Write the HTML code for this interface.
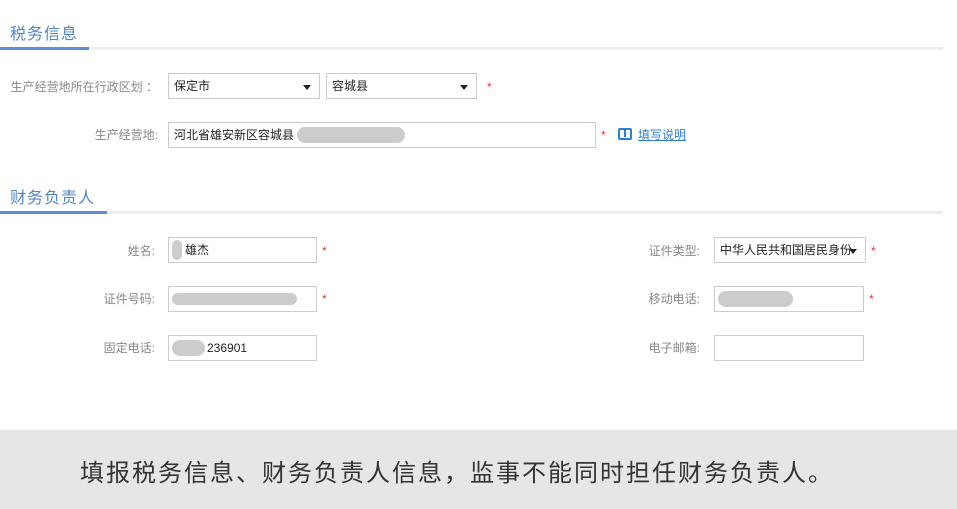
<!DOCTYPE html>
<html><head><meta charset="utf-8"><style>
*{margin:0;padding:0;box-sizing:border-box}
body{width:957px;height:509px;background:#fff;position:relative;overflow:hidden;font-family:"Liberation Sans","Noto Sans CJK SC",sans-serif;font-size:12px;color:#222}
.a{position:absolute}
.t{font-size:16px;color:#4f86c8;letter-spacing:1px}
.lab{color:#888;text-align:right;width:200px;line-height:14px}
.box{border:1px solid #ccc;background:#fff;height:26px;line-height:24px;padding-left:5px;color:#222}
.st{color:#e03a3a;font-size:12px}
.arr{position:absolute;right:8px;top:11px;border-left:4px solid transparent;border-right:4px solid transparent;border-top:5px solid #222}
.blur{position:absolute;background:#ccc;border-radius:8px;height:16px;top:4px}
</style></head><body>
<div class="a t" style="left:10px;top:20px">税务信息</div>
<div class="a" style="left:0;top:47px;width:943px;height:3px;background:#eee"></div>
<div class="a" style="left:0;top:47px;width:89px;height:3px;background:#5b8fd6"></div>
<div class="a lab" style="left:-42px;top:80px">生产经营地所在行政区划 ：</div>
<div class="a box" style="left:168px;top:73px;width:152px">保定市<span class="arr"></span></div>
<div class="a box" style="left:326px;top:73px;width:151px">容城县<span class="arr"></span></div>
<div class="a st" style="left:487px;top:80px">*</div>
<div class="a lab" style="left:-42px;top:128px">生产经营地:</div>
<div class="a box" style="left:168px;top:122px;width:428px">河北省雄安新区容城县 <span class="blur" style="left:128px;width:108px"></span></div>
<div class="a st" style="left:601px;top:128px">*</div>
<div class="a" style="left:618px;top:128px;width:14px;height:12px;border:2px solid #2f7fd0;border-radius:2px"></div>
<div class="a" style="left:624px;top:128px;width:2px;height:9px;background:#2f7fd0"></div>
<div class="a" style="left:638px;top:126px;color:#2f7fd0;text-decoration:underline">填写说明</div>
<div class="a t" style="left:10px;top:184px">财务负责人</div>
<div class="a" style="left:0;top:211px;width:943px;height:3px;background:#eee"></div>
<div class="a" style="left:0;top:211px;width:107px;height:3px;background:#5b8fd6"></div>
<div class="a lab" style="left:-45px;top:244px">姓名:</div>
<div class="a box" style="left:168px;top:237px;width:149px;padding-left:16px">雄杰<span class="blur" style="left:3px;width:10px;height:20px;top:2px"></span></div>
<div class="a st" style="left:322px;top:244px">*</div>
<div class="a lab" style="left:-45px;top:292px">证件号码:</div>
<div class="a box" style="left:168px;top:286px;width:149px"><span class="blur" style="left:3px;width:125px;height:12px;top:6px"></span></div>
<div class="a st" style="left:322px;top:292px">*</div>
<div class="a lab" style="left:-45px;top:341px">固定电话:</div>
<div class="a box" style="left:168px;top:335px;width:149px;padding-left:38px">236901<span class="blur" style="left:3px;width:33px"></span></div>
<div class="a lab" style="left:500px;top:244px">证件类型:</div>
<div class="a box" style="left:714px;top:237px;width:152px">中华人民共和国居民身份<span class="arr"></span></div>
<div class="a st" style="left:871px;top:244px">*</div>
<div class="a lab" style="left:500px;top:292px">移动电话:</div>
<div class="a box" style="left:714px;top:286px;width:150px"><span class="blur" style="left:3px;width:75px"></span></div>
<div class="a st" style="left:869px;top:292px">*</div>
<div class="a lab" style="left:500px;top:341px">电子邮箱:</div>
<div class="a box" style="left:714px;top:335px;width:150px"></div>
<div class="a" style="left:0;top:430px;width:957px;height:79px;background:#e6e6e6"></div>
<div class="a" style="left:80px;top:453px;font-size:24px;color:#333;letter-spacing:2px;white-space:nowrap">填报税务信息、财务负责人信息，监事不能同时担任财务负责人。</div>
</body></html>
